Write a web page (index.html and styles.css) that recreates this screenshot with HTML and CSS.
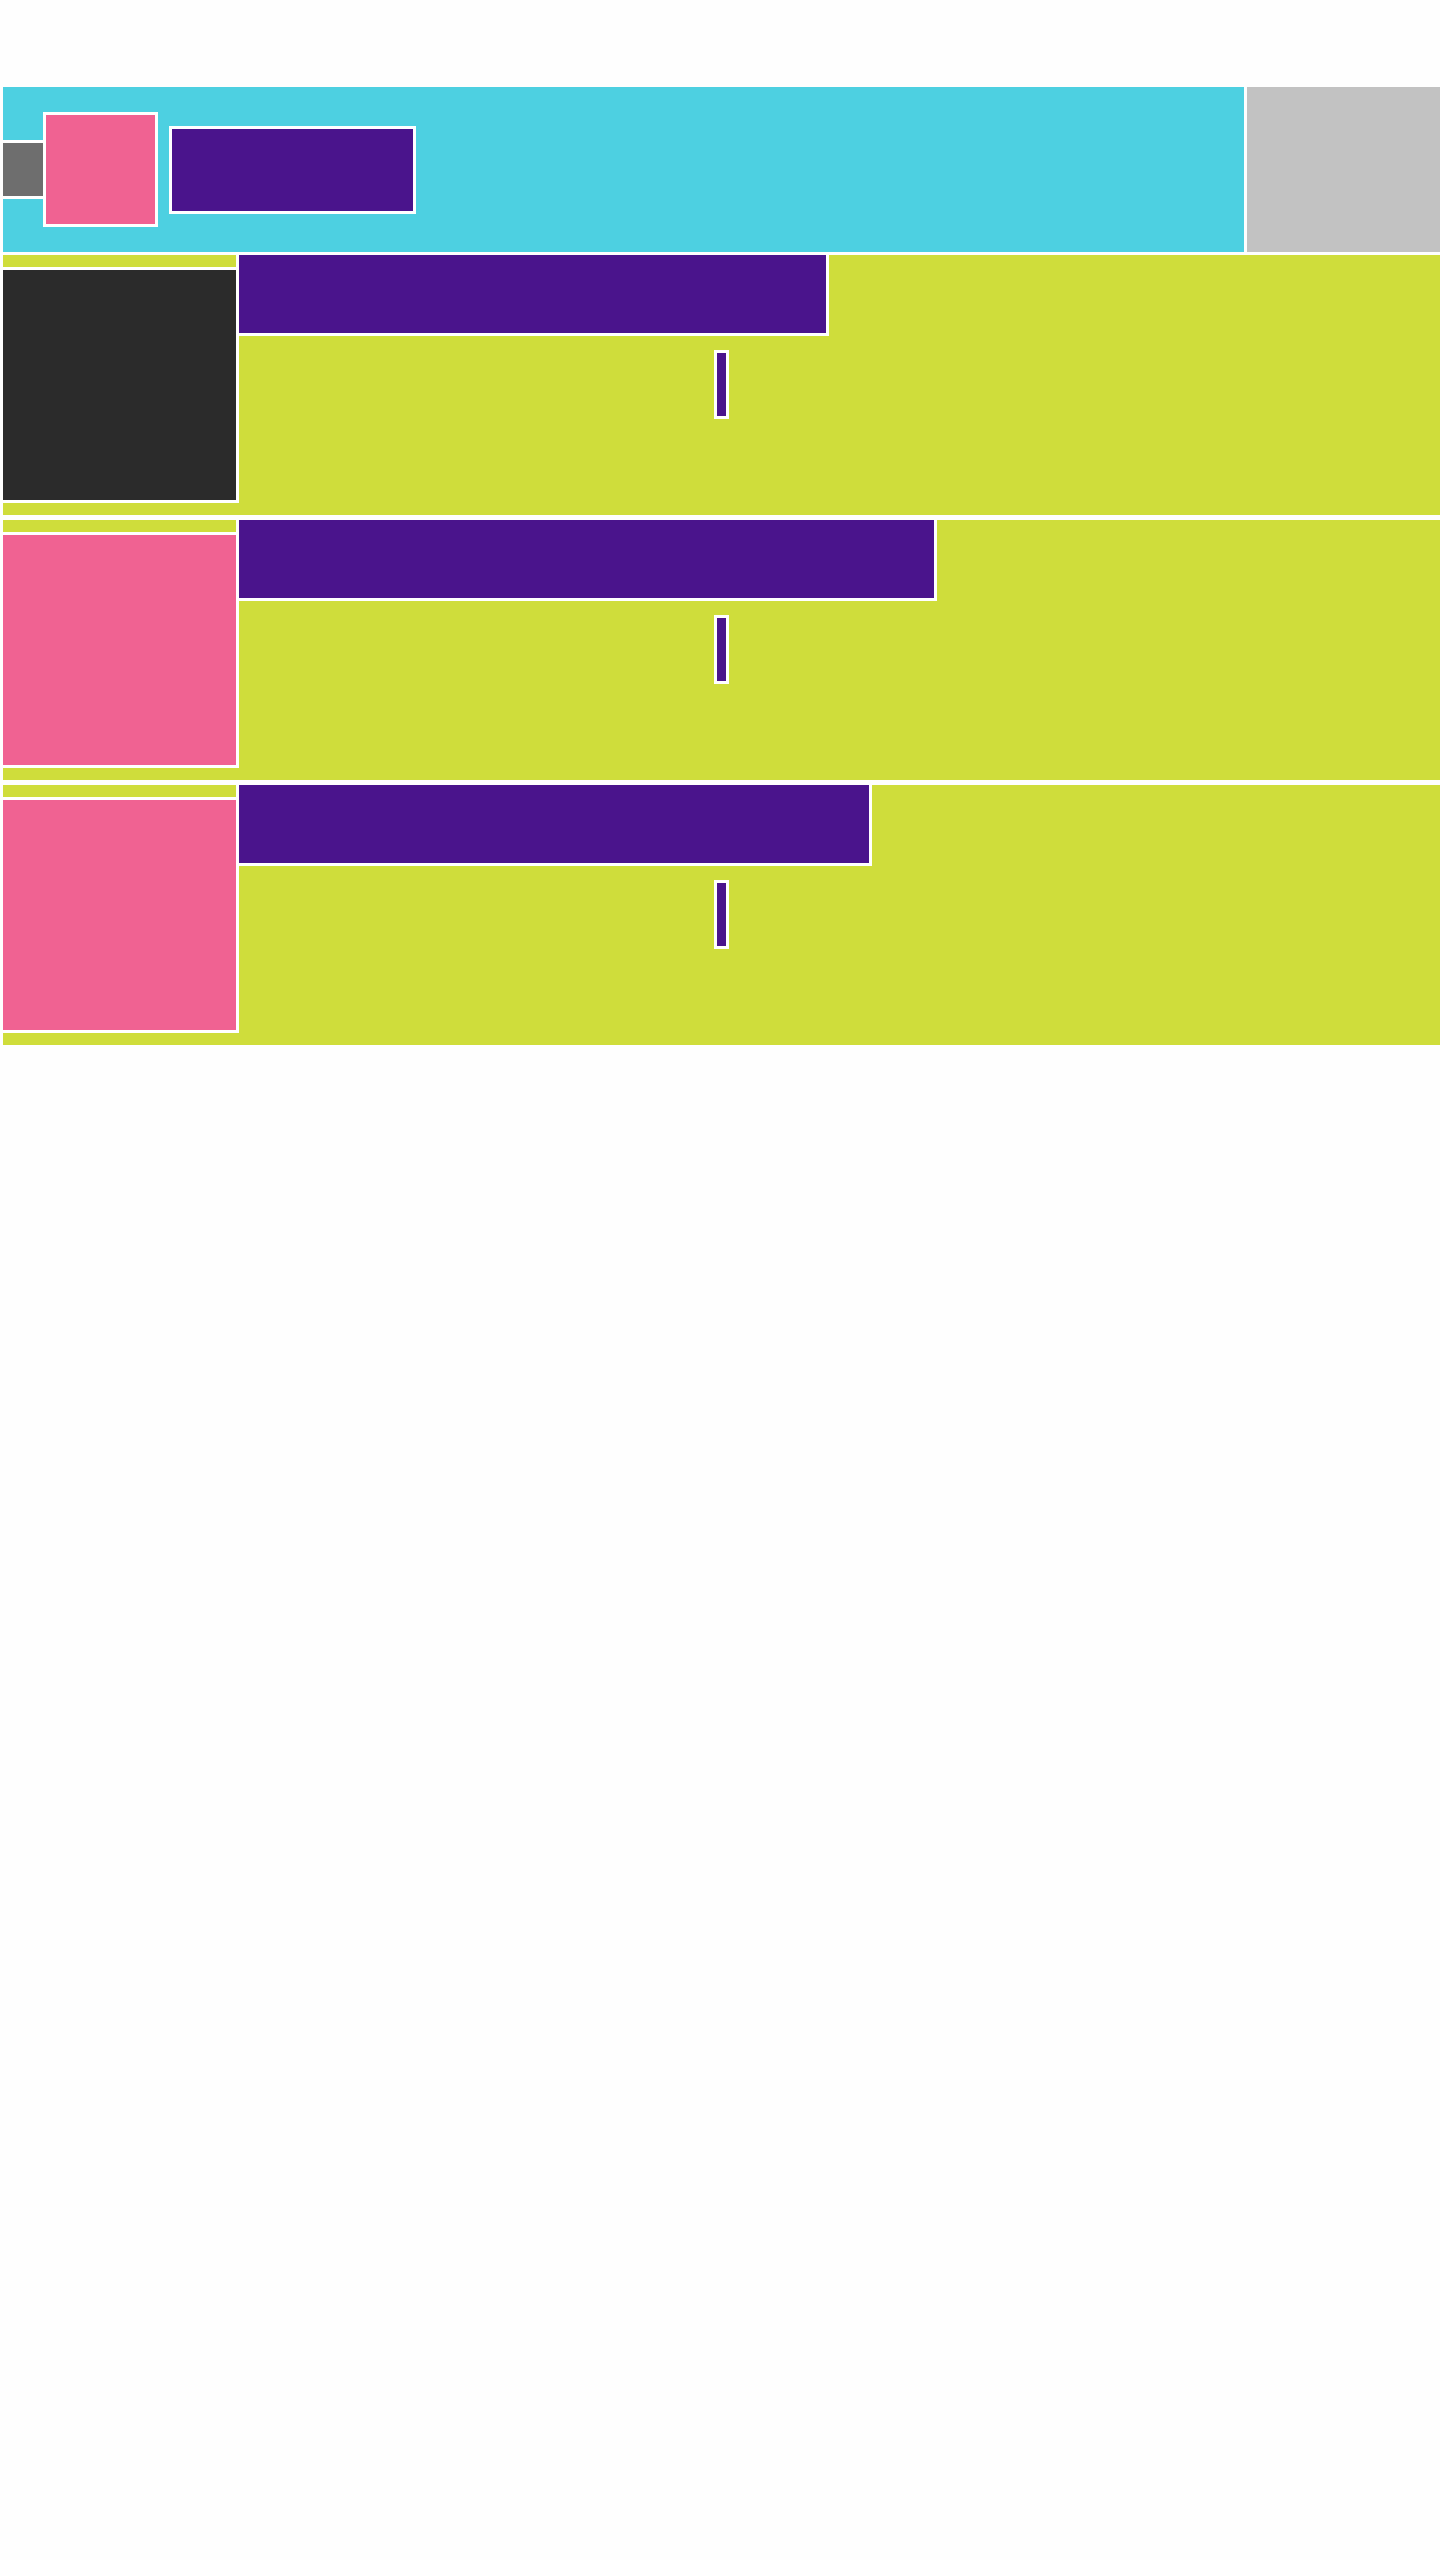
FILE: index.html
```html
<!DOCTYPE html>
<html lang="en">
<head>
    <meta charset="UTF-8">
    <meta name="viewport" content="width=device-width, initial-scale=1.0">
    <title>Feed</title>
    <link rel="stylesheet" href="styles.css">
</head>
<body>
    <div class="page">
        <header class="topbar">
            <div class="brand">
                <div class="back"></div>
                <div class="avatar"></div>
                <div class="name"></div>
            </div>
            <div class="side"></div>
        </header>
        <div class="row">
            <div class="thumbcol">
                <div class="strip"></div>
                <div class="thumb dark"></div>
            </div>
            <div class="info">
                <div class="title w1"></div>
                <div class="bar"></div>
            </div>
        </div>
        <div class="row">
            <div class="thumbcol">
                <div class="strip"></div>
                <div class="thumb"></div>
            </div>
            <div class="info">
                <div class="title w2"></div>
                <div class="bar"></div>
            </div>
        </div>
        <div class="row">
            <div class="thumbcol">
                <div class="strip"></div>
                <div class="thumb"></div>
            </div>
            <div class="info">
                <div class="title w3"></div>
                <div class="bar"></div>
            </div>
        </div>
    </div>
</body>
</html>
```

FILE: styles.css
```css
body, html {
    margin: 0;
    padding: 0;
    background-color: #fefefe;
    font-family: "Liberation Sans", Arial, sans-serif;
}
.page {
    padding: 87px 0 0 3px;
}
.topbar {
    display: flex;
    gap: 3px;
    height: 165px;
    margin-bottom: 3px;
}
.brand {
    flex: 1;
    display: flex;
    align-items: center;
    background-color: #4dd0e1;
}
.side {
    width: 193px;
    background-color: #c2c2c2;
}
.back {
    width: 40px;
    height: 59px;
    box-sizing: border-box;
    background-color: #6e6e6e;
    border-top: 3px solid #ffffff;
    border-bottom: 3px solid #ffffff;
}
.avatar {
    width: 115px;
    height: 115px;
    box-sizing: border-box;
    background-color: #f06292;
    border: 3px solid #ffffff;
}
.name {
    width: 247px;
    height: 88px;
    margin-left: 11px;
    box-sizing: border-box;
    background-color: #4a148c;
    border: 3px solid #ffffff;
}
.row {
    display: flex;
    height: 260px;
    margin-bottom: 5px;
    background-color: #cfdd3b;
}
.thumbcol {
    width: 236px;
    display: flex;
    flex-direction: column;
}
.strip {
    height: 12px;
    border-right: 3px solid #ffffff;
}
.thumb {
    height: 236px;
    box-sizing: border-box;
    background-color: #f06292;
    border-top: 3px solid #ffffff;
    border-right: 3px solid #ffffff;
    border-bottom: 3px solid #ffffff;
}
.thumb.dark {
    background-color: #2b2b2b;
}
.info {
    flex: 1;
}
.title {
    height: 81px;
    box-sizing: border-box;
    background-color: #4a148c;
    border-right: 3px solid #ffffff;
    border-bottom: 3px solid #ffffff;
}
.w1 {
    width: 590px;
}
.w2 {
    width: 698px;
}
.w3 {
    width: 633px;
}
.bar {
    width: 15px;
    height: 69px;
    margin: 14px 0 0 475px;
    box-sizing: border-box;
    background-color: #4a148c;
    border: 3px solid #ffffff;
}
```
